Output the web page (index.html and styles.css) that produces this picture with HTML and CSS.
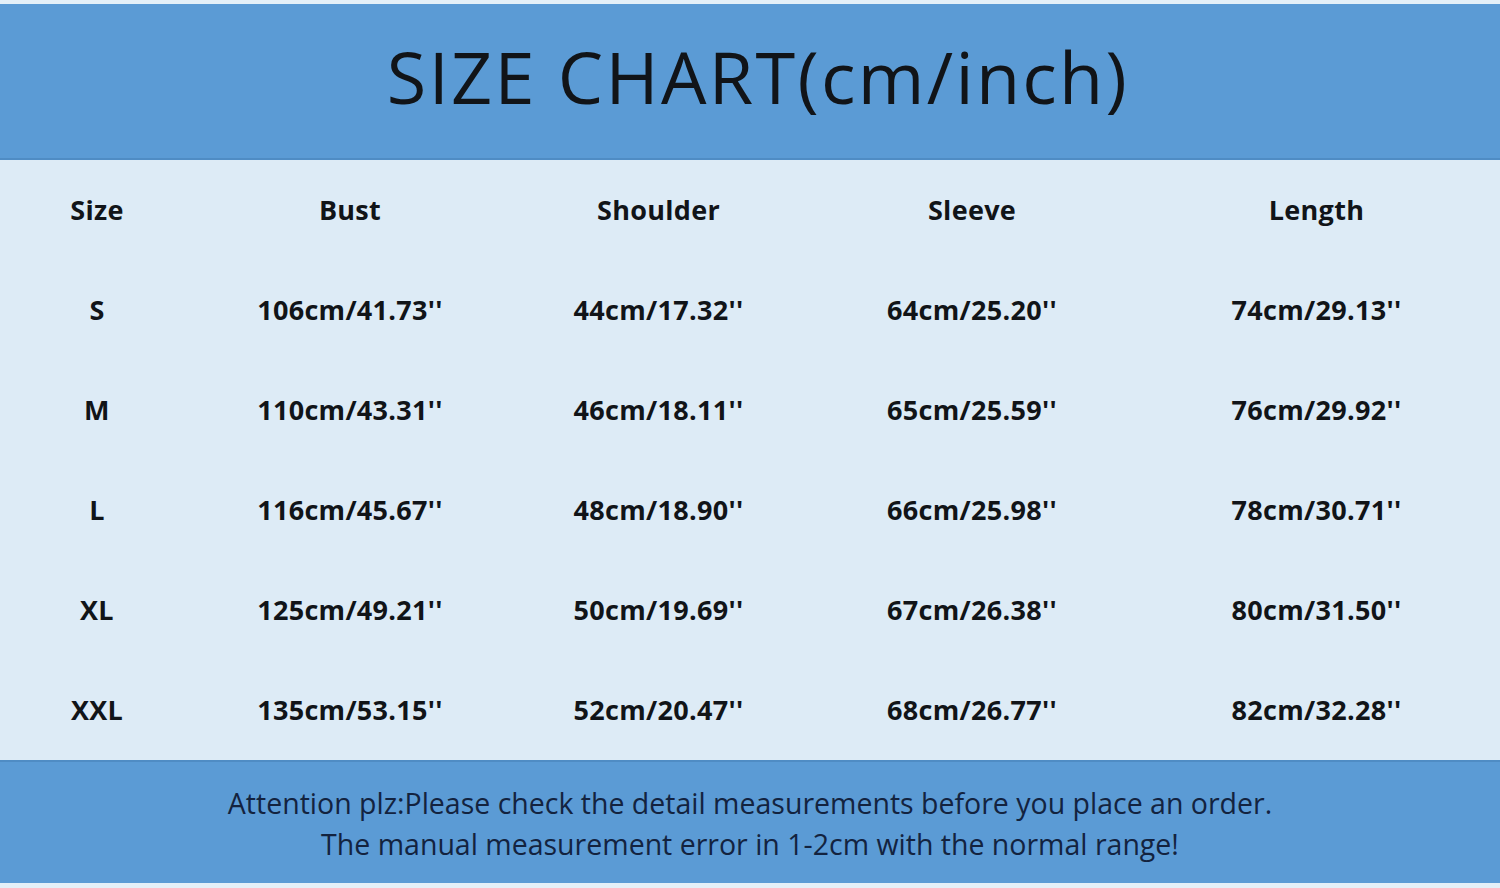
FILE: index.html
```html
<!DOCTYPE html>
<html lang="en">
<head>
<meta charset="utf-8">
<title>Size Chart</title>
<link rel="stylesheet" href="styles.css">
</head>
<body>
<div class="page">
  <header class="title-bar">
    <h1 class="title">SIZE CHART(cm/inch)</h1>
  </header>
  <section class="chart">
    <div class="row head">
      <div class="cell">Size</div><div class="cell">Bust</div><div class="cell">Shoulder</div><div class="cell">Sleeve</div><div class="cell">Length</div>
    </div>
    <div class="row">
      <div class="cell">S</div><div class="cell">106cm/41.73''</div><div class="cell">44cm/17.32''</div><div class="cell">64cm/25.20''</div><div class="cell">74cm/29.13''</div>
    </div>
    <div class="row">
      <div class="cell">M</div><div class="cell">110cm/43.31''</div><div class="cell">46cm/18.11''</div><div class="cell">65cm/25.59''</div><div class="cell">76cm/29.92''</div>
    </div>
    <div class="row">
      <div class="cell">L</div><div class="cell">116cm/45.67''</div><div class="cell">48cm/18.90''</div><div class="cell">66cm/25.98''</div><div class="cell">78cm/30.71''</div>
    </div>
    <div class="row">
      <div class="cell">XL</div><div class="cell">125cm/49.21''</div><div class="cell">50cm/19.69''</div><div class="cell">67cm/26.38''</div><div class="cell">80cm/31.50''</div>
    </div>
    <div class="row">
      <div class="cell">XXL</div><div class="cell">135cm/53.15''</div><div class="cell">52cm/20.47''</div><div class="cell">68cm/26.77''</div><div class="cell">82cm/32.28''</div>
    </div>
  </section>
  <footer class="note">
    <p>Attention plz:Please check the detail measurements before you place an order.</p>
    <p>The manual measurement error in 1-2cm with the normal range!</p>
  </footer>
</div>
</body>
</html>
```

FILE: styles.css
```css
html, body {
  margin: 0;
  padding: 0;
  background: #e4f0f8;
}
.page {
  width: 1500px;
  height: 888px;
  padding-top: 4px;
  box-sizing: border-box;
  display: flex;
  flex-direction: column;
}
.title-bar {
  height: 156px;
  background: #5b9bd5;
  border-bottom: 2px solid #4f8cc4;
  box-sizing: border-box;
  display: flex;
  align-items: center;
  justify-content: center;
  padding-left: 16px;
}
.title {
  margin: 0;
  font-family: "Open Sans", sans-serif;
  font-weight: 400;
  font-size: 72px;
  letter-spacing: 2.3px;
  color: #111418;
  line-height: 1;
  padding-bottom: 10px;
}
.chart {
  height: 600px;
  background: #ddebf6;
  display: flex;
  flex-direction: column;
}
.row {
  height: 100px;
  display: grid;
  grid-template-columns: 194px 312px 305px 322px 1fr;
  align-items: center;
}
.cell {
  text-align: center;
  font-family: "Open Sans", sans-serif;
  font-weight: 700;
  font-size: 27px;
  letter-spacing: 0.3px;
  color: #111418;
  padding-bottom: 2px;
}
.note {
  height: 123px;
  background: #5b9bd5;
  border-top: 2px solid #4f8cc4;
  box-sizing: border-box;
  display: flex;
  flex-direction: column;
  align-items: center;
  justify-content: center;
  padding-top: 2px;
}
.note p {
  margin: 0;
  font-family: "Open Sans", sans-serif;
  font-size: 28.5px;
  line-height: 41px;
  color: #13233f;
}
```
